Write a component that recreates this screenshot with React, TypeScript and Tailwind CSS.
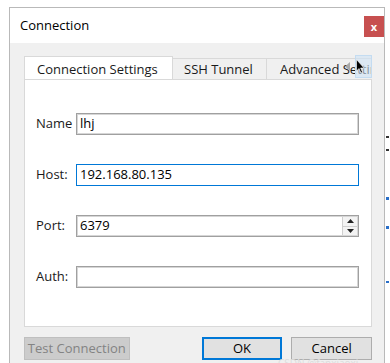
import React from 'react'

const font = { fontFamily: '"Open Sans", "Noto Sans", sans-serif' }

function Field({ label, value, focused, spin }: { label: string; value: string; focused?: boolean; spin?: boolean }) {
  return (
    <div className="flex items-center h-[22px]">
      <div className="w-[40px] text-[13px] text-[#1a1a1a]">{label}</div>
      <div
        className={`relative flex items-center h-[22px] w-[283px] bg-white pl-[3px] text-[13px] text-black border ${
          focused ? 'border-[#0078d7]' : 'border-[#a0a0a0] shadow-[inset_0_0_0_1px_#d6d6d6]'
        }`}
      >
        {value}
        {spin && (
          <div className="absolute right-[1px] top-[1px] bottom-[1px] w-[15px] flex flex-col border-l border-[#cfcfcf]">
            <div className="flex-1 flex items-center justify-center bg-[#f3f3f3] border-b border-[#cfcfcf]">
              <svg width="7" height="4" viewBox="0 0 7 4"><path d="M0 4 L3.5 0 L7 4 Z" fill="#222" /></svg>
            </div>
            <div className="flex-1 flex items-center justify-center bg-[#f3f3f3]">
              <svg width="7" height="4" viewBox="0 0 7 4"><path d="M0 0 L3.5 4 L7 0 Z" fill="#222" /></svg>
            </div>
          </div>
        )}
      </div>
    </div>
  )
}

export default function App() {
  return (
    <div className="relative w-[390px] h-[363px] bg-white overflow-hidden" style={font}>
      {/* Dialog window */}
      <div className="ml-[9px] mt-[7px] w-[376px] h-[360px] border border-[#b9b9b9] bg-[#f0f0f0] flex flex-col">
        {/* Title bar */}
        <div className="h-[35px] bg-white flex items-start justify-between">
          <div className="pl-[10px] pt-[8px] text-[13px] text-black">Connection</div>
          <div className="mt-[8px] w-[20px] h-[21px] bg-[#c75050] flex items-center justify-center text-white text-[11px] font-bold leading-none">
            x
          </div>
        </div>

        {/* Body */}
        <div className="pl-[14px] pr-[12px] pt-[12px] flex flex-col">
          {/* Tab bar */}
          <div className="relative flex items-end h-[24px] text-[13px] text-[#1a1a1a] overflow-hidden">
            <div className="h-[24px] w-[149px] shrink-0 bg-white border border-b-0 border-[#d9d9d9] pl-[12px] pt-[3px] z-10 -mb-[1px]">
              Connection Settings
            </div>
            <div className="h-[21px] w-[94px] shrink-0 bg-[#f0f0f0] border-t border-r border-[#d9d9d9] pl-[11px] leading-[20px]">
              SSH Tunnel
            </div>
            <div className="h-[21px] w-[140px] shrink-0 bg-[#f0f0f0] border-t border-[#d9d9d9] pl-[13px] leading-[20px] whitespace-nowrap">
              Advanced Settings
            </div>
            {/* scroll buttons */}
            <div className="absolute right-0 top-0 h-[23px] flex">
              <div className="w-[16px] h-full flex items-center justify-center">
                <svg width="5" height="9" viewBox="0 0 5 9"><path d="M5 0 L0 4.5 L5 9 Z" fill="#a8a8a8" /></svg>
              </div>
              <div className="w-[17px] h-full bg-[#cfe3f5]/60 border border-[#c4dcf1]" />
            </div>
            {/* mouse cursor */}
            <svg className="absolute right-[7px] top-[4px]" width="9" height="15" viewBox="0 0 9 15">
              <path d="M0.5 0.5 L0.5 12 L3 9.5 L5 14 L6.5 13.3 L4.6 9 L8 9 Z" fill="#000" stroke="#fff" strokeWidth="0.6" />
            </svg>
          </div>

          {/* Tab pane */}
          <div className="h-[248px] bg-white border border-[#d9d9d9] pl-[11px] pt-[33px] flex flex-col gap-[29px]">
            <Field label="Name" value="lhj" />
            <Field label="Host:" value="192.168.80.135" focused />
            <Field label="Port:" value="6379" spin />
            <Field label="Auth:" value="" />
          </div>

          {/* Buttons */}
          <div className="flex items-start pt-[10px] text-[13px]">
            <div className="w-[106px] h-[23px] bg-[#cccccc] border border-[#bfbfbf] text-[#838383] flex items-center justify-center">
              Test Connection
            </div>
            <div className="ml-[72px] w-[81px] h-[23px] bg-[#e1e1e1] border-2 border-[#0078d7] text-black flex items-center justify-center">
              OK
            </div>
            <div className="ml-[9px] w-[81px] h-[23px] bg-[#e1e1e1] border border-[#adadad] text-black flex items-center justify-center">
              Cancel
            </div>
          </div>
        </div>
      </div>

      {/* watermark */}
      <div className="absolute left-[278px] top-[358px] text-[10px] leading-[10px] text-[#dcdcdc] whitespace-nowrap">CSDN @fanxiaoxi</div>

      {/* marks behind the dialog, right side */}
      <div className="absolute left-[386px] top-[136px] w-[3px] h-[2px] bg-[#333]" />
      <div className="absolute left-[386px] top-[149px] w-[3px] h-[2px] bg-[#333]" />
      <div className="absolute left-[386px] top-[197px] w-[3px] h-[3px] bg-[#2a6fc9]" />
      <div className="absolute left-[386px] top-[226px] w-[3px] h-[3px] bg-[#2a6fc9]" />
      <div className="absolute left-[386px] top-[281px] w-[3px] h-[2px] bg-[#2a6fc9]" />
    </div>
  )
}
